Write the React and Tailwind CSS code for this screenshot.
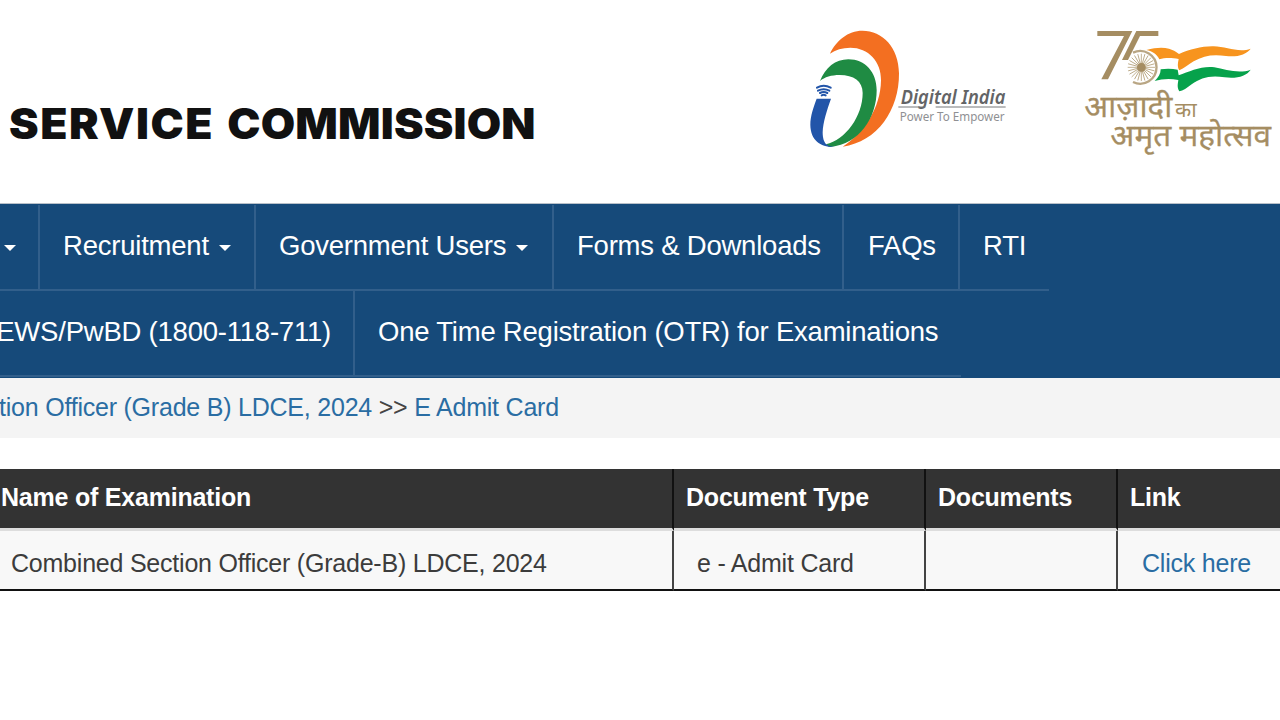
import React from "react";

function Caret() {
  return (
    <svg className="mt-1 h-[6px] w-[12px] shrink-0" viewBox="0 0 12 6">
      <path d="M0 0H12L6 6Z" fill="#fff" />
    </svg>
  );
}

function DigitalIndiaLogo() {
  return (
    <svg className="h-[140px] w-[220px] shrink-0" viewBox="0 0 660 420" role="img" aria-label="Digital India">
      <path d="M90 101C108 62 144 32 187 32C248 32 296 82 297 160C298 270 232 366 128 380C192 339 242 264 243 181C244 124 205 83 151 83C127 83 106 89 90 101Z" fill="#f36f21" />
      <path d="M60 183C76 143 106 118 145 118C196 118 230 157 230 211C230 293 178 372 92 381C86 381 82 378 78 373C136 360 188 289 188 219C188 183 161 165 119 165C94 165 74 171 60 183Z" fill="#1f8b43" />
      <path d="M50 236H93C81 270 69 306 68 337C68 354 72 367 79 373C87 379 96 381 105 381C64 383 32 363 31 315C31 287 41 260 50 236Z" fill="#2255a9" />
      <g fill="none" stroke="#2255a9" strokeWidth="6" strokeLinecap="round">
        <path d="M51 203Q71 192 92 203M54 212Q71 203 88 212M60 219Q71 213 82 219M65 226Q71 223 77 226" />
      </g>
      <text x="302" y="251" fontFamily="Noto Sans, sans-serif" fontSize="58" fontWeight="600" fontStyle="italic" fill="#636466" textLength="314" lengthAdjust="spacingAndGlyphs">Digital India</text>
      <path d="M295 261H376M407 261H617" stroke="#77787a" strokeWidth="3" />
      <text x="299" y="302" fontFamily="Noto Sans, sans-serif" fontSize="40" fontWeight="400" fill="#8f9093" textLength="315" lengthAdjust="spacingAndGlyphs">Power To Empower</text>
    </svg>
  );
}

const SPOKES = Array.from({ length: 24 }, (_, i) => i * 15);

function AmritMahotsavLogo() {
  return (
    <svg className="h-[145px] w-[210px] shrink-0" viewBox="0 0 630 435" role="img" aria-label="75">
      <path d="M82 33H187L114 178H94L162 48H82Z" fill="#a58d62" />
      <path d="M199 33H265V48H210L174 120H156Z" fill="#a58d62" />
      <path d="M189 98A49 49 0 1 1 189 186" fill="none" stroke="#b9a684" strokeWidth="7" />
      <g stroke="#b3a079" strokeWidth="2.4">
        {SPOKES.map((a) => (
          <path key={a} d="M214 142V101" transform={`rotate(${a} 214 142)`} />
        ))}
      </g>
      <circle cx="214" cy="142" r="13" fill="#a58d62" />
      <path d="M229 90C258 82 280 82 297 86C308 89 317 94 327 102C360 88 397 78 431 79C469 80 506 99 542 86C529 104 501 112 468 108C431 102 401 106 371 124C355 134 342 146 328 151C321 140 324 128 326 117C302 112 284 113 268 118C261 103 248 94 229 90Z" fill="#f7941e" />
      <path d="M272 148C290 145 308 146 323 149L326 166C359 154 396 137 433 142C467 148 506 163 542 149C530 168 500 177 464 172C417 165 393 174 365 193C351 204 339 212 328 214C320 201 324 190 325 180C299 175 275 177 254 183C265 173 272 162 272 148Z" fill="#06a24b" />
      <g fill="#a58d62" stroke="#a58d62" strokeWidth="0.8" fontFamily="Noto Sans Devanagari, Noto Sans, Lohit Devanagari, sans-serif">
        <text x="43" y="290" fontSize="91" textLength="264" lengthAdjust="spacingAndGlyphs">आज़ादी</text>
        <text x="315" y="290" fontSize="62" strokeWidth="0" textLength="65" lengthAdjust="spacingAndGlyphs">का</text>
        <text x="121" y="379" fontSize="91" textLength="482" lengthAdjust="spacingAndGlyphs">अमृत महोत्सव</text>
      </g>
    </svg>
  );
}

function NavItem({ children, className, caret }) {
  return (
    <li className={`flex h-full items-center gap-[10px] border-b-2 border-[#325f8b] pb-[2px] ${className}`}>
      {children && <a className="whitespace-nowrap">{children}</a>}
      {caret && <Caret />}
    </li>
  );
}

export default function App() {
  return (
    <div className="h-[720px] w-[1280px] overflow-hidden bg-white font-['Liberation_Sans',Arial,sans-serif]">
      <header className="flex h-[203px] items-start">
        <h1 className="w-[800px] shrink-0 pt-[99px] pl-[9px] font-['Inter','Liberation_Sans',sans-serif] text-[42px] leading-[50px] font-black whitespace-nowrap text-[#111]">
          <span className="inline-block origin-left scale-x-[1.06]">
            <span className="tracking-[1.4px]">SERVICE</span>
            <span className="tracking-[0.15px] [word-spacing:4px]"> COMMISSION</span>
          </span>
        </h1>
        <div className="flex gap-[50px] pt-5">
          <DigitalIndiaLogo />
          <AmritMahotsavLogo />
        </div>
      </header>

      <nav className="h-[175px] border-t border-[#b8c0c9] bg-[#164a7a] pt-px text-[27.5px] leading-[32px] tracking-[-0.22px] text-white">
        <ul className="flex h-[86px]">
          <NavItem className="w-[40px] border-r-2 pl-[4px]" caret />
          <NavItem className="w-[216px] border-r-2 pl-[23px]" caret>Recruitment</NavItem>
          <NavItem className="w-[298px] border-r-2 pl-[23px]" caret>Government Users</NavItem>
          <NavItem className="w-[290px] border-r-2 pl-[23px]">Forms &amp; Downloads</NavItem>
          <NavItem className="w-[116px] border-r-2 pl-[24px]">FAQs</NavItem>
          <NavItem className="w-[89px] pl-[23px]">RTI</NavItem>
        </ul>
        <ul className="flex h-[86px]">
          <NavItem className="w-[355px] justify-end border-r-2 pr-[22px]">EWS/PwBD (1800-118-711)</NavItem>
          <NavItem className="w-[606px] pl-[23px]">One Time Registration (OTR) for Examinations</NavItem>
        </ul>
      </nav>

      <div className="h-[60px] bg-[#f4f4f4] pt-[15px] text-[25px] leading-[28px] tracking-[-0.22px] whitespace-nowrap text-[#444]">
        <a className="-ml-px text-[#2a6da3]">tion Officer (Grade B) LDCE, 2024</a> &gt;&gt; <a className="text-[#2a6da3]">E Admit Card</a>
      </div>

      <table className="mt-[31px] w-[1280px] table-fixed border-separate border-spacing-0 text-left text-[25px] leading-[28px] tracking-[-0.22px] whitespace-nowrap">
        <colgroup>
          <col className="w-[674px]" />
          <col className="w-[252px]" />
          <col className="w-[192px]" />
          <col className="w-[162px]" />
        </colgroup>
        <thead className="bg-[#333] text-white">
          <tr className="h-[62px]">
            <th className="border-r-2 border-b-3 border-r-[#111] border-b-[#ddd] p-0 pb-1 pl-px">Name of Examination</th>
            <th className="border-r-2 border-b-3 border-r-[#111] border-b-[#ddd] p-0 pb-1 pl-3">Document Type</th>
            <th className="border-r-2 border-b-3 border-r-[#111] border-b-[#ddd] p-0 pb-1 pl-3">Documents</th>
            <th className="border-b-3 border-[#ddd] p-0 pb-1 pl-3">Link</th>
          </tr>
        </thead>
        <tbody className="bg-[#f8f8f8] text-[#3c3c3c]">
          <tr className="h-[60px]">
            <td className="border-r-2 border-b-2 border-r-[#444] border-b-[#111] p-0 pt-[5px] pl-[11px]">Combined Section Officer (Grade-B) LDCE, 2024</td>
            <td className="border-r-2 border-b-2 border-r-[#444] border-b-[#111] p-0 pt-[5px] pl-[23px]">e - Admit Card</td>
            <td className="border-r-2 border-b-2 border-r-[#444] border-b-[#111] p-0" />
            <td className="border-b-2 border-[#111] p-0 pt-[5px] pl-6 text-[#2a6da3]"><a>Click here</a></td>
          </tr>
        </tbody>
      </table>
    </div>
  );
}
